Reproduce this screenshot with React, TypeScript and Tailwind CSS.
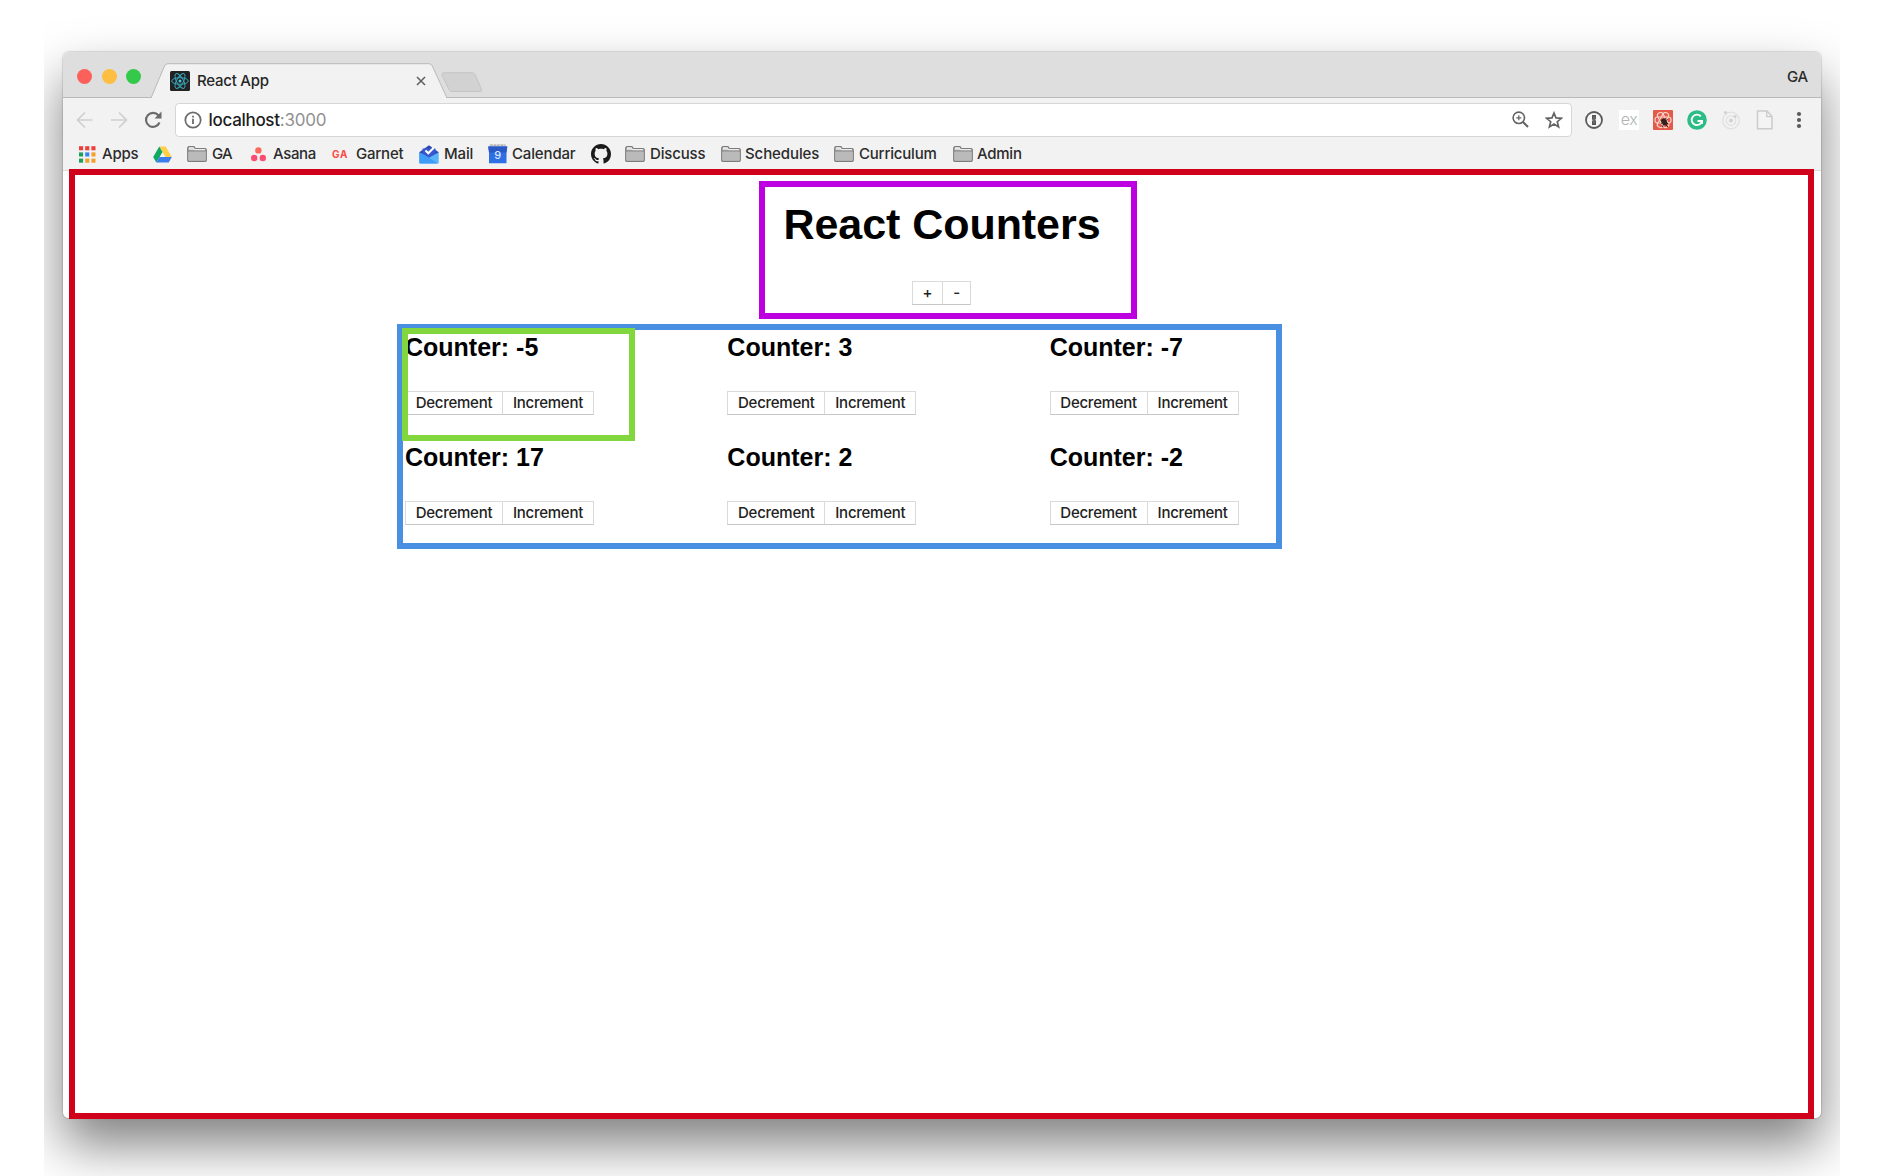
import type { ReactNode } from "react";

const FolderIcon = () => (
  <svg width="20" height="16" viewBox="0 0 20 16" className="shrink-0">
    <path d="M.8 14.2V2.2Q.8.8 2 .8H6.600Q7.600.8 8 2.600H18Q19.200 2.600 19.200 3.800V14.200Q19.200 15.200 18.200 15.200H1.800Q.8 15.200.8 14.200Z" fill="#d9d9d9" stroke="#7c7c7c" strokeWidth="1.400" />
    <path d="M1.500 5.200H18.500V14.500H1.500Z" fill="#bababa" />
    <path d="M1 4.900H19" stroke="#828282" strokeWidth="1.100" />
    <path d="M2 1.900H6.500L7.500 3.700H18" stroke="#f8f8f8" strokeWidth="1" fill="none" />
  </svg>
);

const APP_COLORS = ["#ee3e3a", "#ee3e3a", "#ee3e3a", "#1fa05a", "#3b82f4", "#f2a02c", "#1fa05a", "#f2a02c", "#f2a02c"];

const AppsIcon = () => (
  <svg width="17" height="17" viewBox="0 0 17 17" className="shrink-0">
    {APP_COLORS.map((c, i) => (
      <rect key={i} x={(i % 3) * 6.2} y={Math.floor(i / 3) * 6.2 + 0.2} width="4.1" height="4.1" fill={c} />
    ))}
  </svg>
);

const DriveIcon = () => (
  <svg width="19" height="17" viewBox="0 0 19 17" className="ml-[-1px] shrink-0">
    <path d="M6.300.5H12.700L18.800 11H12.400Z" fill="#ffcf48" />
    <path d="M6.300.5L.2 11L3.300 16.500L9.500 6Z" fill="#11a861" />
    <path d="M6.500 11H18.800L15.700 16.500H3.300Z" fill="#3b7ded" />
  </svg>
);

const AsanaIcon = () => (
  <svg width="16" height="15" viewBox="0 0 16 15" className="shrink-0">
    <circle cx="7.400" cy="3.400" r="3.200" fill="#fb6a5c" />
    <circle cx="3.200" cy="11" r="3.200" fill="#fb4d72" />
    <circle cx="11.800" cy="11" r="3.200" fill="#fb4d72" />
  </svg>
);

const MailIcon = () => (
  <svg width="20" height="19" viewBox="0 0 20 19" className="shrink-0">
    <path d="M.3 7.200L10 .3L19.700 7.200L16 13H4Z" fill="#2848b0" />
    <path d="M3.500 3.500H16.500V12H3.500Z" fill="#3558cf" />
    <path d="M6.500 5.500L9.300 8.300L14.700 2.800" fill="none" stroke="#fff" strokeWidth="2.100" />
    <path d="M.3 7.200L10 12.800L19.700 7.200V17.500Q19.700 18.500 18.700 18.500H1.300Q.3 18.500.3 17.500Z" fill="#5cb3fb" />
    <path d="M.3 7.200L16 16.500L18.700 18.500H1.300Q.3 18.500.3 17.500Z" fill="#3f9cf5" />
  </svg>
);

const CalendarIcon = () => (
  <svg width="20" height="20" viewBox="0 0 20 20" className="shrink-0">
    <path d="M1.500.3H18V3H1.500Z" fill="#d0d0d0" />
    <path d="M2.500 1.200H17" stroke="#a3a3a3" strokeWidth="1" strokeDasharray="2 1.500" />
    <path d="M.2 2.500H19.300L18.500 8V19.200H1V8Z" fill="#2f6fe4" />
    <path d="M.2 2.500H19.300L18.500 8.500H1Z" fill="#2859c5" />
    <text x="9.700" y="15" textAnchor="middle" fontSize="11" fill="#dbe8ff" fontFamily="Inter, sans-serif">9</text>
  </svg>
);

const GithubIcon = () => (
  <svg width="20" height="20" viewBox="0 0 16 16" className="shrink-0" fill="#1b1b1b">
    <path d="M8 0C3.580 0 0 3.580 0 8c0 3.540 2.290 6.530 5.470 7.590.4.070.55-.17.55-.38 0-.19-.01-.82-.01-1.490-2.010.37-2.530-.49-2.690-.94-.09-.23-.48-.94-.82-1.130-.28-.15-.68-.52-.01-.53.63-.01 1.080.58 1.230.82.72 1.210 1.870.87 2.330.66.07-.52.28-.87.51-1.070-1.780-.2-3.640-.89-3.640-3.950 0-.87.31-1.590.82-2.150-.08-.2-.36-1.020.08-2.120 0 0 .67-.21 2.200.82.64-.18 1.320-.27 2-.27s1.360.09 2 .27c1.530-1.040 2.200-.82 2.200-.82.44 1.100.16 1.920.08 2.120.51.56.82 1.270.82 2.150 0 3.070-1.870 3.750-3.650 3.950.29.25.54.73.54 1.480 0 1.070-.01 1.930-.01 2.200 0 .21.15.46.55.38A8.010 8.010 0 0 0 16 8c0-4.420-3.580-8-8-8z" />
  </svg>
);

const ReactIcon = () => (
  <svg width="20" height="20" viewBox="0 0 20 20" className="shrink-0">
    <rect width="20" height="20" rx="1.500" fill="#222" />
    <g fill="none" stroke="#37a3b8" strokeWidth="1">
      <ellipse cx="10" cy="10" rx="8.300" ry="3.300" transform="rotate(0 10 10)" />
      <ellipse cx="10" cy="10" rx="8.300" ry="3.300" transform="rotate(60 10 10)" />
      <ellipse cx="10" cy="10" rx="8.300" ry="3.300" transform="rotate(120 10 10)" />
    </g>
    <circle cx="10" cy="10" r="1.500" fill="#4ac4dc" />
  </svg>
);

type Bookmark = { icon: ReactNode; label?: string; slot: string; gap?: string; track?: string };

const BOOKMARKS: Bookmark[] = [
  { icon: <AppsIcon />, label: "Apps", slot: "w-[75px]", gap: "gap-[6px]", track: "tracking-[-0.25px]" },
  { icon: <DriveIcon />, slot: "w-[33px]" },
  { icon: <FolderIcon />, label: "GA", slot: "w-[64px]", gap: "gap-[5px]", track: "tracking-[-0.9px]" },
  { icon: <AsanaIcon />, label: "Asana", slot: "w-[81px]", gap: "gap-[6px]", track: "tracking-[-0.35px]" },
  {
    icon: <span className="w-[18px] text-[10px] font-bold tracking-[0.800px] text-[#fb4a44]">GA</span>,
    label: "Garnet", slot: "w-[87px]", gap: "gap-[6px]", track: "tracking-[-0.2px]",
  },
  { icon: <MailIcon />, label: "Mail", slot: "w-[69px]", gap: "gap-[5px]", track: "tracking-[-0.15px]" },
  { icon: <CalendarIcon />, label: "Calendar", slot: "w-[103px]", gap: "gap-[4px]", track: "tracking-[-0.15px]" },
  { icon: <GithubIcon />, slot: "w-[34px]" },
  { icon: <FolderIcon />, label: "Discuss", slot: "w-[96px]", gap: "gap-[5px]", track: "tracking-[-0.15px]" },
  { icon: <FolderIcon />, label: "Schedules", slot: "w-[113px]", gap: "gap-[4px]", track: "tracking-[-0.1px]" },
  { icon: <FolderIcon />, label: "Curriculum", slot: "w-[119px]", gap: "gap-[5px]", track: "tracking-[-0.2px]" },
  { icon: <FolderIcon />, label: "Admin", slot: "w-[80px]", gap: "gap-[4px]", track: "tracking-[-0.25px]" },
];

const TabStrip = () => (
  <div className="relative flex h-[46px] items-start border-b border-[#b9b9b9] bg-[#dedede]">
    <div className="flex w-[88px] gap-[9.500px] pt-[16.500px] pl-[14px]">
      <span className="size-[15px] shrink-0 rounded-full bg-[#fc605b]" />
      <span className="size-[15px] shrink-0 rounded-full bg-[#fdbe41]" />
      <span className="size-[15px] shrink-0 rounded-full bg-[#34c94b]" />
    </div>
    <div className="relative h-[46px] w-[296px]">
      <svg width="296" height="36" viewBox="0 0 296 36" className="absolute bottom-[-1px] left-0">
        <path d="M0 35.500L13.500 3Q14.500.7 17 .7H278Q280.300.7 281.300 3L296 35.500V36H0Z" fill="#f2f2f2" />
        <path d="M0 35L13.500 3Q14.500.7 17 .7H278Q280.300.7 281.300 3L296 35" fill="none" stroke="#b9b9b9" />
      </svg>
      <div className="relative flex items-center pt-[19px] pl-[19px]">
        <ReactIcon />
        <span className="ml-[7px] text-[15px] leading-[20px] font-medium tracking-[-0.25px] text-[#262626]">React App</span>
        <svg width="10" height="10" viewBox="0 0 10 10" className="ml-auto mr-[21px]">
          <path d="M1 1L9 9M9 1L1 9" stroke="#5e5e5e" strokeWidth="1.500" />
        </svg>
      </div>
    </div>
    <svg width="42" height="21" viewBox="0 0 42 21" className="ml-[-6px] mt-[20px]">
      <path d="M2.500.8H31Q33 .8 34 2.500L40.500 17Q41 19.500 39 19.500H11Q9 19.500 8 17.500L1 3Q.7.8 2.500.8Z" fill="#d2d2d2" stroke="#c4c4c4" />
    </svg>
    <span className="ml-auto mr-[13px] pt-[15px] text-[15px] leading-[20px] font-medium tracking-[-0.2px] text-[#2b2b2b]">GA</span>
  </div>
);

const Toolbar = () => (
  <div className="flex h-[41px] items-center bg-[#f2f2f2]">
    <svg width="112" height="41" viewBox="0 0 112 41" className="shrink-0" fill="none">
      <path d="M29.500 22H14.500M22 14.500L14.500 22L22 29.500" stroke="#cfcfcf" strokeWidth="1.700" />
      <path d="M48 22H63M56 14.500L63.500 22L56 29.500" stroke="#cfcfcf" strokeWidth="1.700" />
      <path d="M95.500 17.500A7 7 0 1 0 96.500 24.500" stroke="#6b6b6b" strokeWidth="2.100" />
      <path d="M98.500 13.500V20.500H91.500Z" fill="#6b6b6b" />
    </svg>
    <div className="mt-[2px] flex h-[34px] w-[1397px] items-center rounded-[4px] border border-[#d6d6d6] bg-white pl-[7.500px]">
      <svg width="18" height="18" viewBox="0 0 18 18" fill="none">
        <circle cx="9" cy="9" r="7.700" stroke="#6b6b6b" strokeWidth="1.700" />
        <path d="M9 7.800V13" stroke="#6b6b6b" strokeWidth="1.800" />
        <path d="M9 4.800V6.500" stroke="#6b6b6b" strokeWidth="1.800" />
      </svg>
      <span className="ml-[7px] pt-[1px] text-[17px] leading-[24px] tracking-[-0.2px] text-[#1d1d1d]">
        <span className="font-medium tracking-[-0.3px]">localhost</span>
        <span className="text-[#919191]">:3000</span>
      </span>
      <svg width="17" height="17" viewBox="0 0 17 17" className="ml-auto" fill="none" stroke="#636363">
        <circle cx="6.800" cy="6.800" r="5.700" strokeWidth="1.600" />
        <path d="M11 11L16 16" strokeWidth="2.200" />
        <path d="M4.300 6.800H9.300M6.800 4.300V9.300" strokeWidth="1.200" />
      </svg>
      <svg width="18" height="18" viewBox="0 0 18 18" className="mr-[8px] ml-[16px]" fill="none">
        <path d="M9 2L11 6.900L16.400 7.300L12.300 10.700L13.600 16L9 13.100L4.400 16L5.700 10.700L1.600 7.300L7 6.900Z" stroke="#636363" strokeWidth="1.700" />
      </svg>
    </div>
    <div className="mt-[2px] flex items-center">
      <svg width="20" height="20" viewBox="0 0 20 20" className="ml-[12px]">
        <circle cx="10" cy="10" r="8" fill="#f6f6f6" stroke="#5b5b5b" strokeWidth="1.800" />
        <path d="M8 5H12V8.500L11.300 9.800L12 11V15H8V11.500L8.700 10.200L8 9Z" fill="#565656" />
        <path d="M10 6.500V13.500" stroke="#999" strokeWidth=".6" />
      </svg>
      <span className="ml-[15px] flex h-[20px] w-[20px] items-center justify-center bg-white pb-[2px] text-[16px] leading-[16px] font-light tracking-[-0.5px] text-[#b0b4b4]">ex</span>
      <svg width="20" height="20" viewBox="0 0 20 20" className="ml-[14px]">
        <rect width="20" height="20" rx="1" fill="#e35b48" />
        <g fill="none" stroke="#f8d3cb" strokeWidth="1.200">
          <rect x="2" y="7" width="16" height="6" rx="2.500" />
          <rect x="2" y="7" width="16" height="6" rx="2.500" transform="rotate(60 10 10)" />
          <rect x="2" y="7" width="16" height="6" rx="2.500" transform="rotate(120 10 10)" />
        </g>
        <ellipse cx="11.300" cy="12" rx="2.500" ry="3.800" transform="rotate(-35 11.300 12)" fill="#33211f" />
        <path d="M7.500 10L15.500 14M12.500 8L9.500 17M8 13.500L14.500 9.500M12 14L15 17" stroke="#33211f" strokeWidth="1" />
      </svg>
      <svg width="20" height="20" viewBox="0 0 20 20" className="ml-[14px]" fill="none">
        <circle cx="10" cy="10" r="9.800" fill="#2cbc85" />
        <path d="M13.800 6.400A5.200 5.200 0 1 0 15 11H10.500" stroke="#fff" strokeWidth="1.900" />
        <path d="M15.200 10.200V14" stroke="#fff" strokeWidth="1.500" />
      </svg>
      <svg width="20" height="20" viewBox="0 0 20 20" className="ml-[14px]" fill="none" stroke="#dfdfdf">
        <circle cx="10" cy="10.500" r="8.300" strokeWidth="1.300" />
        <circle cx="10" cy="10.500" r="4.800" strokeWidth="1.100" />
        <circle cx="10" cy="10.500" r="2" fill="#d2d2d2" stroke="none" />
        <circle cx="4.500" cy="2.500" r="1.600" fill="#d2d2d2" stroke="none" />
        <circle cx="14" cy="6.500" r="1.500" fill="#d2d2d2" stroke="none" />
      </svg>
      <svg width="18" height="20" viewBox="0 0 18 20" className="ml-[15px]">
        <path d="M1.500 1H11L16 6.500V18.800H1.500Z" fill="#f4f4f4" stroke="#cbcbcb" strokeWidth="1.500" />
        <path d="M10.800 1V6.700H16" fill="none" stroke="#cbcbcb" strokeWidth="1.300" />
      </svg>
      <svg width="6" height="18" viewBox="0 0 6 18" className="ml-[22px]" fill="#5a5a5a">
        <circle cx="3" cy="3" r="2.100" />
        <circle cx="3" cy="9" r="2.100" />
        <circle cx="3" cy="15" r="2.100" />
      </svg>
    </div>
  </div>
);

const BookmarksBar = () => (
  <div className="flex h-[32px] items-center border-b border-[#dcdcdc] bg-[#f2f2f2] pb-[1px] pl-[16px] text-[15px] font-medium text-[#2b2b2b]">
    {BOOKMARKS.map((b, i) => (
      <div key={i} className={`flex shrink-0 items-center ${b.slot} ${b.gap ?? ""} ${b.track ?? ""}`}>
        {b.icon}
        {b.label && <span className="leading-[20px] whitespace-nowrap">{b.label}</span>}
      </div>
    ))}
  </div>
);

const PushButton = ({ label, width }: { label: string; width: string }) => (
  <button
    className={`h-[24px] border border-[#dadada] border-b-[#c6c6c6] bg-white pb-[1px] text-center text-[15px] leading-[20px] font-medium tracking-[-0.250px] whitespace-nowrap text-[#222] ${width}`}
  >
    {label}
  </button>
);

const Counter = ({ value }: { value: number }) => (
  <div className="h-[110px]">
    <h2 className="pt-[1px] text-[25px] leading-[30px] font-bold text-black">Counter: {value}</h2>
    <div className="mt-[29px] flex">
      <PushButton label="Decrement" width="w-[98px]" />
      <PushButton label="Increment" width="w-[92px] -ml-px" />
    </div>
  </div>
);

const COUNTERS = [-5, 3, -7, 17, 2, -2];

export default function App() {
  return (
    <div className="h-[1176px] w-[1900px] overflow-hidden bg-white font-['Inter',sans-serif]">
      <div className="ml-[44px] h-[1176px] w-[1796px] overflow-hidden pt-[52px] pl-[19px]">
        <div className="relative h-[1066px] w-[1758px] rounded-[6px] shadow-[0_27px_52px_rgba(0,0,0,0.5),0_0_1px_1px_rgba(0,0,0,0.12)]">
          <div className="h-full overflow-hidden rounded-[6px] bg-white">
            <TabStrip />
            <Toolbar />
            <BookmarksBar />
            <main>
              <header className="flex flex-col items-center pt-[24px]">
                <h1 className="font-['Liberation_Sans',Arial,sans-serif] text-[43px] leading-[58px] font-bold tracking-[-0.05px] text-black">React Counters</h1>
                <div className="mt-[28px] mr-[1px] flex">
                  <PushButton label="+" width="w-[31px]" />
                  <PushButton label="-" width="w-[29px] -ml-px" />
                </div>
              </header>
              <section className="mt-[26px] ml-[342px] grid w-[967px] grid-cols-3 [&_h2]:font-['Liberation_Sans',Arial,sans-serif]">
                {COUNTERS.map((value, i) => (
                  <Counter key={i} value={value} />
                ))}
              </section>
            </main>
          </div>
          <div className="absolute top-[117px] left-[6px] h-[950px] w-[1745px] border-[6px] border-[#d0021b]" />
          <div className="absolute top-[128.500px] left-[696px] h-[138px] w-[378px] border-[6px] border-[#bd00e0]" />
          <div className="absolute top-[272px] left-[334px] h-[225px] w-[885px] border-[6px] border-[#4a90e2]" />
          <div className="absolute top-[276px] left-[339px] h-[113px] w-[233px] border-[6px] border-[#82d63e]" />
        </div>
      </div>
    </div>
  );
}
